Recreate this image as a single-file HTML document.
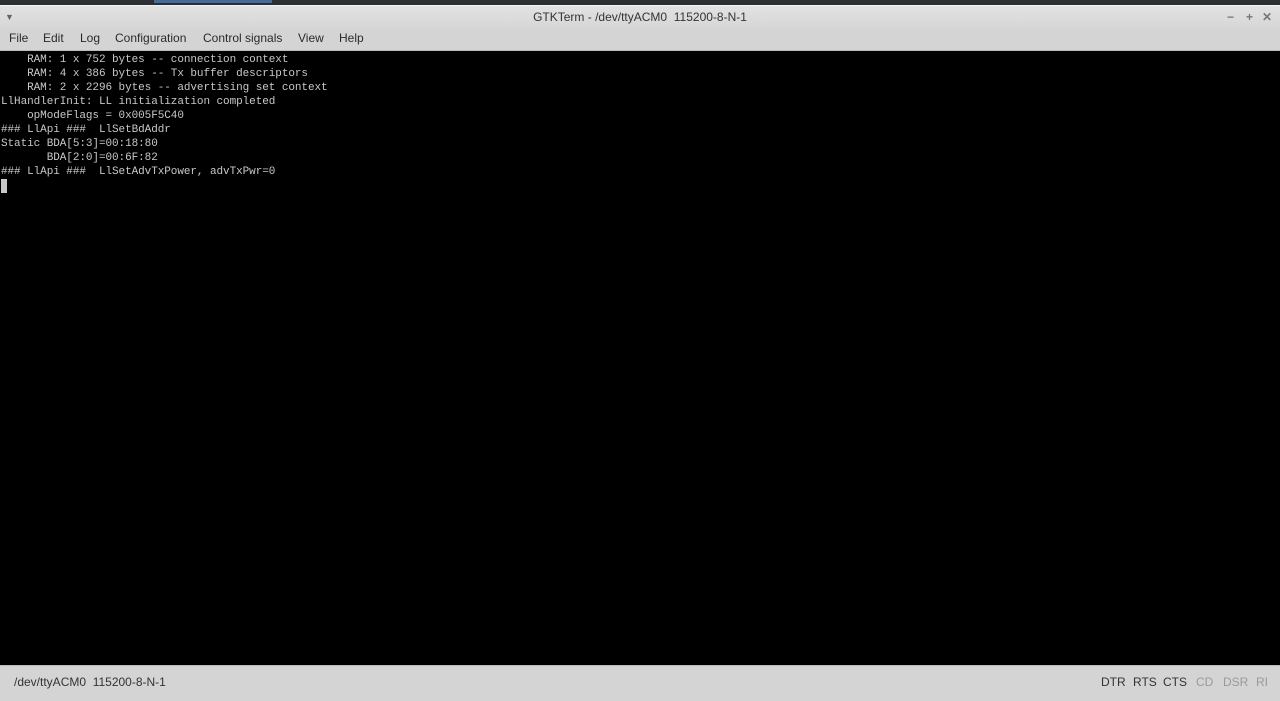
<!DOCTYPE html>
<html><head><style>
body{margin:0;width:1280px;height:700px;overflow:hidden;background:#000;font-family:"Liberation Sans",sans-serif;position:relative}
#top{position:absolute;left:0;top:0;width:1280px;height:5px;background:#2b2e33}
#top i{position:absolute;left:154px;top:0;width:118px;height:3px;background:#4a6a90}
#title{position:absolute;top:5px;left:0;width:1280px;height:23px;background:linear-gradient(#e2e2e2,#d6d6d6);border-top:1px solid #f2f2f2;font-size:12px;color:#333;text-align:center;line-height:23px}
#menu{position:absolute;top:28px;left:0;width:1280px;height:22px;background:#d4d4d4;font-size:12px;color:#2a2a2a;border-bottom:1px solid #bbb}
#menu span{position:absolute;top:3px}
#term{position:absolute;top:53px;left:1px;font-family:"Liberation Mono",monospace;font-size:11px;letter-spacing:-0.07px;line-height:14px;color:#c8c8c8;white-space:pre}
#cur{position:absolute;left:1px;top:179px;width:6px;height:14px;background:#c8c8c8}
#status{position:absolute;top:665px;left:0;width:1280px;height:35px;background:#d4d4d4;border-top:1px solid #bbb;font-size:12px;color:#333}
#status span{position:absolute;top:9px}
.dim{color:#9a9a9a}
</style></head><body>
<div id="top"><i></i></div>
<div id="title"><span style="position:absolute;left:5px;top:0;font-size:9px;color:#666">&#9660;</span>GTKTerm - /dev/ttyACM0&nbsp; 115200-8-N-1<span style="position:absolute;right:46px;top:0;color:#777;font-weight:bold">&minus;</span><span style="position:absolute;right:27px;top:0;color:#777;font-weight:bold">+</span><span style="position:absolute;right:8px;top:0;color:#777;font-weight:bold">&#10005;</span></div>
<div id="menu"><span style="left:9px">File</span><span style="left:43px">Edit</span><span style="left:80px">Log</span><span style="left:115px">Configuration</span><span style="left:203px">Control signals</span><span style="left:298px">View</span><span style="left:339px">Help</span></div>
<div id="term">    RAM: 1 x 752 bytes -- connection context
    RAM: 4 x 386 bytes -- Tx buffer descriptors
    RAM: 2 x 2296 bytes -- advertising set context
LlHandlerInit: LL initialization completed
    opModeFlags = 0x005F5C40
### LlApi ###  LlSetBdAddr
Static BDA[5:3]=00:18:80
       BDA[2:0]=00:6F:82
### LlApi ###  LlSetAdvTxPower, advTxPwr=0</div>
<div id="cur"></div>
<div id="status"><span style="left:14px">/dev/ttyACM0&nbsp; 115200-8-N-1</span><span style="left:1101px">DTR</span><span style="left:1133px">RTS</span><span style="left:1163px">CTS</span><span class="dim" style="left:1196px">CD</span><span class="dim" style="left:1223px">DSR</span><span class="dim" style="left:1256px">RI</span></div>
</body></html>
